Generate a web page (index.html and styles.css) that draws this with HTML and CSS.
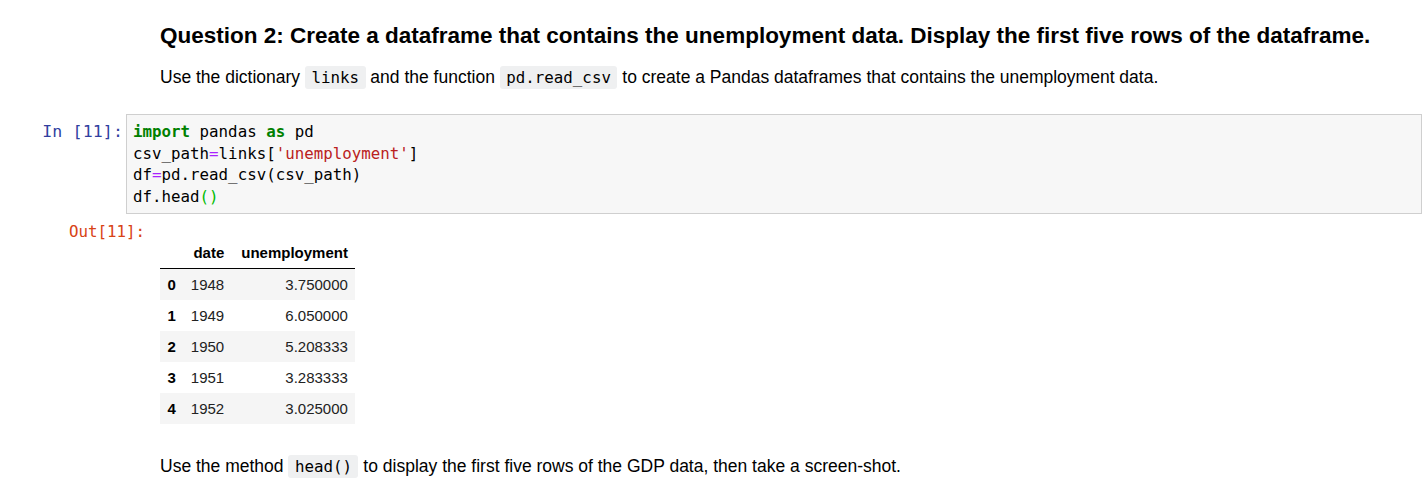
FILE: index.html
```html
<!DOCTYPE html>
<html>
<head>
<meta charset="utf-8">
<link rel="stylesheet" href="styles.css">
</head>
<body>
<div class="notebook">
  <div class="cell md-cell first">
    <div class="md">
      <h3 class="heading">Question 2: Create a dataframe that contains the unemployment data. Display the first five rows of the dataframe.</h3>
      <p class="para">Use the dictionary <code class="ic">links</code> and the function <code class="ic">pd.read_csv</code> to create a Pandas dataframes that contains the unemployment data.</p>
    </div>
  </div>

  <div class="cell code-cell">
    <div class="prompt in">In&nbsp;[11]:</div>
    <div class="input-box"><pre class="code"><span class="kw">import</span> pandas <span class="kw">as</span> pd
csv_path<span class="op">=</span>links[<span class="str">'unemployment'</span>]
df<span class="op">=</span>pd.read_csv(csv_path)
df.head<span class="br">()</span></pre></div>
  </div>

  <div class="cell out-cell">
    <div class="prompt out">Out[11]:</div>
    <div class="output">
      <table class="df">
        <thead>
          <tr><th></th><th>date</th><th>unemployment</th></tr>
        </thead>
        <tbody>
          <tr><th>0</th><td>1948</td><td>3.750000</td></tr>
          <tr><th>1</th><td>1949</td><td>6.050000</td></tr>
          <tr><th>2</th><td>1950</td><td>5.208333</td></tr>
          <tr><th>3</th><td>1951</td><td>3.283333</td></tr>
          <tr><th>4</th><td>1952</td><td>3.025000</td></tr>
        </tbody>
      </table>
    </div>
  </div>

  <div class="cell md-cell last">
    <div class="md">
      <p class="para">Use the method <code class="ic">head()</code> to display the first five rows of the GDP data, then take a screen-shot.</p>
    </div>
  </div>
</div>
</body>
</html>
```

FILE: styles.css
```css
html, body {
  margin: 0;
  padding: 0;
  background: #ffffff;
}

body {
  font-family: "Liberation Sans", Arial, sans-serif;
  color: #000000;
  width: 1422px;
  height: 485px;
  overflow: hidden;
}

.notebook {
  display: flex;
  flex-direction: column;
}

.cell {
  display: flex;
}

.md-cell {
  padding-left: 160px;
}

.md-cell.first {
  padding-top: 23px;
}

.heading {
  margin: 0;
  font-size: 22.5px;
  line-height: 26px;
  font-weight: bold;
}

.para {
  margin: 16px 0 0 0;
  font-size: 17.5px;
  line-height: 24px;
}

.ic {
  font-family: "DejaVu Sans Mono", "Liberation Mono", monospace;
  font-size: 15.8px;
  background: #eff0f1;
  border-radius: 3px;
  padding: 2px 6.5px;
}

.prompt {
  font-family: "DejaVu Sans Mono", "Liberation Mono", monospace;
  font-size: 15.8px;
  line-height: 21.5px;
  text-align: right;
  flex: none;
}

.code-cell {
  margin-top: 24px;
}

.prompt.in {
  width: 123px;
  color: #303f9f;
  padding-top: 7px;
  padding-right: 3px;
  font-size: 16.6px;
  letter-spacing: 0.1px;
}

.input-box {
  flex: 1;
  background: #f7f7f7;
  border: 1px solid #cfcfcf;
  padding: 6px 6px;
}

.code {
  margin: 0;
  font-family: "DejaVu Sans Mono", "Liberation Mono", monospace;
  font-size: 15.8px;
  line-height: 21.5px;
  color: #000000;
}

.kw { color: #008000; font-weight: bold; }
.op { color: #aa22ff; }
.str { color: #ba2121; }
.br { color: #00bb00; }

.out-cell {
  margin-top: 5px;
}

.prompt.out {
  width: 145px;
  padding-top: 2px;
  padding-right: 15px;
  color: #d84315;
}

.output {
  padding-top: 18px;
}

.df {
  border-collapse: collapse;
  border-spacing: 0;
  font-size: 15px;
  color: #000000;
}

.df th, .df td {
  padding: 7.5px 7.5px;
  line-height: 16px;
  text-align: right;
  vertical-align: middle;
}

.df td:last-child,
.df th:last-child {
  padding-right: 7.5px;
  padding-left: 9.5px;
}

.df td {
  color: #222222;
}

.df th {
  font-weight: bold;
}

.df thead th {
  border-bottom: 1px solid #000000;
}

.df tbody tr:nth-child(odd) {
  background: #f5f5f5;
}

.md-cell.last .para {
  margin-top: 30px;
}
```
